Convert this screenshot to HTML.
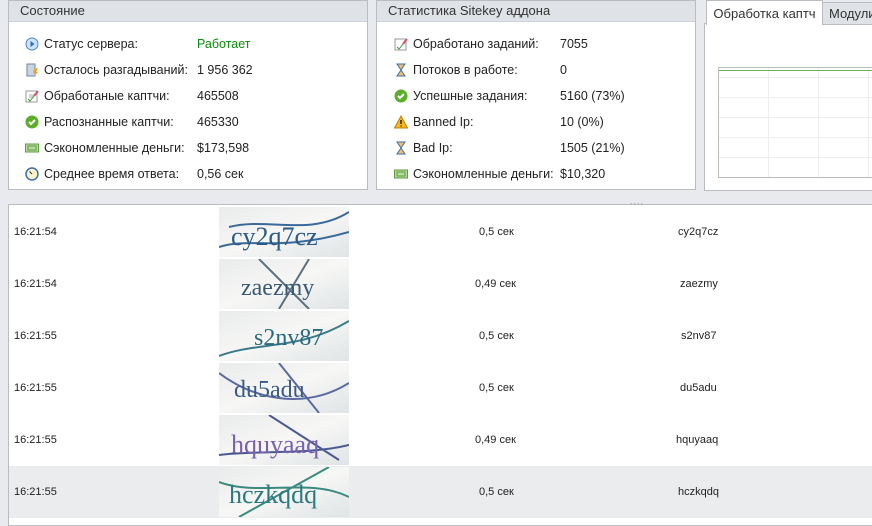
<!DOCTYPE html><html><head><meta charset="utf-8"><style>
body{margin:0;width:872px;height:517px;background:#e8eaed;font-family:"Liberation Sans",sans-serif;font-size:12.5px;color:#222;position:relative;overflow:hidden}
.p{position:absolute;background:#fff;border:1px solid #b9bcc1}
.h{position:absolute;left:0;right:0;top:0;height:20px;background:#dfe2e6;border-bottom:1px solid #cfd2d6;color:#333;font-size:13px;line-height:20px;padding-left:11px}
.r{position:absolute;height:18px;line-height:18px;white-space:nowrap}
.ic{position:absolute;width:14px;height:14px}
.t{position:absolute;font-size:11px;line-height:12px}
.row{position:absolute;left:9px;right:0;height:52px}
.cap{position:absolute;left:219px;width:130px;height:50px;background:linear-gradient(160deg,#e9ecec,#f7f7f5 50%,#dfe4e6)}
</style></head><body>
<div class="p" style="left:8px;top:0;width:358px;height:188px"><div class="h">Состояние</div></div>
<div class="p" style="left:376px;top:0;width:318px;height:188px"><div class="h">Статистика Sitekey аддона</div></div>
<div class="p" style="left:704px;top:23px;width:170px;height:166px"></div>
<div style="position:absolute;left:706px;top:0;width:115px;height:24px;background:#fff;border:1px solid #b9bcc1;border-bottom:none;font-size:13px;line-height:26px;text-align:center;color:#333">Обработка каптч</div>
<div style="position:absolute;left:822px;top:2px;width:60px;height:21px;background:#dfe2e6;border:1px solid #b9bcc1;font-size:13px;line-height:22px;padding-left:6px;color:#333">Модули</div>
<div style="position:absolute;left:718px;top:67px;width:160px;height:109px;border:1px solid #bbb;background:repeating-linear-gradient(90deg,transparent 0 49px,#eee 49px 50px),repeating-linear-gradient(0deg,transparent 0 19px,#eee 19px 20px)"></div>
<div style="position:absolute;left:719px;top:70px;width:160px;height:1px;background:#6aad5e"></div>
<div style="position:absolute;left:630px;top:196px;color:#999;font-size:9px;letter-spacing:1px">....</div>

<svg class="ic" style="left:25px;top:37px" viewBox="0 0 14 14"><circle cx="7" cy="7" r="6" fill="#cfe3f7" stroke="#4a86c5"/><path d="M5.5 4l4 3-4 3z" fill="#2d6db3"/></svg>
<div class="r" style="left:44px;top:35px">Статус сервера:</div><div class="r" style="left:197px;top:35px;color:#0a8a0a">Работает</div>
<svg class="ic" style="left:25px;top:63px" viewBox="0 0 14 14"><rect x="2" y="1" width="8" height="12" fill="#c9d6e6" stroke="#6e86a6"/><path d="M9 6l4-1-2 4h2l-4 4 1-3H8z" fill="#f0a020"/></svg>
<div class="r" style="left:44px;top:61px">Осталось разгадываний:</div><div class="r" style="left:197px;top:61px">1 956 362</div>
<svg class="ic" style="left:25px;top:89px" viewBox="0 0 14 14"><rect x="1" y="2" width="11" height="11" fill="#fff" stroke="#999"/><path d="M4 6h5M4 8h5" stroke="#aaa"/><path d="M3 10l2 2 4-5" stroke="#3a9a3a" fill="none"/><path d="M9 7l4-5" stroke="#c56" stroke-width="2"/></svg>
<div class="r" style="left:44px;top:87px">Обработаные каптчи:</div><div class="r" style="left:197px;top:87px">465508</div>
<svg class="ic" style="left:25px;top:115px" viewBox="0 0 14 14"><circle cx="7" cy="7" r="6.5" fill="#5cae2a"/><path d="M4 7l2 2 4-4" stroke="#fff" stroke-width="2" fill="none"/></svg>
<div class="r" style="left:44px;top:113px">Распознанные каптчи:</div><div class="r" style="left:197px;top:113px">465330</div>
<svg class="ic" style="left:25px;top:141px" viewBox="0 0 14 14"><rect x="0.5" y="3" width="13" height="8" fill="#b8dca0" stroke="#5c9a3c"/><rect x="3" y="5" width="8" height="4" fill="none" stroke="#5c9a3c"/></svg>
<div class="r" style="left:44px;top:139px">Сэкономленные деньги:</div><div class="r" style="left:197px;top:139px">$173,598</div>
<svg class="ic" style="left:25px;top:167px" viewBox="0 0 14 14"><circle cx="7" cy="7" r="6" fill="#fdf3c8" stroke="#3a6fb0" stroke-width="1.5"/><path d="M7 7L4.5 4.5" stroke="#333"/></svg>
<div class="r" style="left:44px;top:165px">Среднее время ответа:</div><div class="r" style="left:197px;top:165px">0,56 сек</div>

<svg class="ic" style="left:394px;top:37px" viewBox="0 0 14 14"><rect x="1" y="2" width="11" height="11" fill="#fff" stroke="#999"/><path d="M3 10l2 2 4-5" stroke="#3a9a3a" fill="none"/><path d="M9 7l4-5" stroke="#c56" stroke-width="2"/></svg>
<div class="r" style="left:413px;top:35px">Обработано заданий:</div><div class="r" style="left:560px;top:35px">7055</div>
<svg class="ic" style="left:394px;top:63px" viewBox="0 0 14 14"><path d="M3 1h8L7 7l4 6H3l4-6z" fill="#f2c060" stroke="#3a6fb0"/></svg>
<div class="r" style="left:413px;top:61px">Потоков в работе:</div><div class="r" style="left:560px;top:61px">0</div>
<svg class="ic" style="left:394px;top:89px" viewBox="0 0 14 14"><circle cx="7" cy="7" r="6.5" fill="#5cae2a"/><path d="M4 7l2 2 4-4" stroke="#fff" stroke-width="2" fill="none"/></svg>
<div class="r" style="left:413px;top:87px">Успешные задания:</div><div class="r" style="left:560px;top:87px">5160 (73%)</div>
<svg class="ic" style="left:394px;top:115px" viewBox="0 0 14 14"><path d="M7 1l6.5 12H.5z" fill="#f5b820" stroke="#c08000"/><path d="M7 5v4M7 10.5v1" stroke="#222" stroke-width="1.5"/></svg>
<div class="r" style="left:413px;top:113px">Banned Ip:</div><div class="r" style="left:560px;top:113px">10 (0%)</div>
<svg class="ic" style="left:394px;top:141px" viewBox="0 0 14 14"><path d="M3 1h8L7 7l4 6H3l4-6z" fill="#f2c060" stroke="#3a6fb0"/></svg>
<div class="r" style="left:413px;top:139px">Bad Ip:</div><div class="r" style="left:560px;top:139px">1505 (21%)</div>
<svg class="ic" style="left:394px;top:167px" viewBox="0 0 14 14"><rect x="0.5" y="3" width="13" height="8" fill="#b8dca0" stroke="#5c9a3c"/><rect x="3" y="5" width="8" height="4" fill="none" stroke="#5c9a3c"/></svg>
<div class="r" style="left:413px;top:165px">Сэкономленные деньги:</div><div class="r" style="left:560px;top:165px">$10,320</div>

<div class="p" style="left:8px;top:204px;width:870px;height:320px;border-right:none"></div>
<div class="row" style="top:206px"><div class="t" style="left:5px;top:20px">16:21:54</div><div class="t" style="left:470px;top:20px">0,5 сек</div><div class="t" style="left:669px;top:20px">cy2q7cz</div></div>
<div class="row" style="top:258px"><div class="t" style="left:5px;top:20px">16:21:54</div><div class="t" style="left:466px;top:20px">0,49 сек</div><div class="t" style="left:671px;top:20px">zaezmy</div></div>
<div class="row" style="top:310px"><div class="t" style="left:5px;top:20px">16:21:55</div><div class="t" style="left:470px;top:20px">0,5 сек</div><div class="t" style="left:672px;top:20px">s2nv87</div></div>
<div class="row" style="top:362px"><div class="t" style="left:5px;top:20px">16:21:55</div><div class="t" style="left:470px;top:20px">0,5 сек</div><div class="t" style="left:671px;top:20px">du5adu</div></div>
<div class="row" style="top:414px"><div class="t" style="left:5px;top:20px">16:21:55</div><div class="t" style="left:466px;top:20px">0,49 сек</div><div class="t" style="left:667px;top:20px">hquyaaq</div></div>
<div class="row" style="top:466px;background:#ebecee"><div class="t" style="left:5px;top:20px">16:21:55</div><div class="t" style="left:470px;top:20px">0,5 сек</div><div class="t" style="left:669px;top:20px">hczkqdq</div></div>

<div class="cap" style="top:207px"><svg width="130" height="50"><path d="M0 40C30 30 60 45 130 25M10 20C50 10 90 30 130 5" stroke="#3a6a9a" stroke-width="2" fill="none"/><text x="12" y="38" font-size="26" fill="#2a5a85" font-family="Liberation Serif">cy2q7cz</text></svg></div>
<div class="cap" style="top:259px"><svg width="130" height="50"><path d="M40 0L90 50M90 0L60 50" stroke="#5a7080" stroke-width="2" fill="none"/><text x="22" y="36" font-size="24" fill="#3a5a75" font-family="Liberation Serif">zaezmy</text></svg></div>
<div class="cap" style="top:311px"><svg width="130" height="50"><path d="M0 45C40 30 80 40 130 10" stroke="#3a7a8a" stroke-width="2" fill="none"/><text x="35" y="34" font-size="24" fill="#2a6a80" font-family="Liberation Serif">s2nv87</text></svg></div>
<div class="cap" style="top:363px"><svg width="130" height="50"><path d="M0 10C40 40 90 45 130 20M60 0L100 50" stroke="#5a6aa0" stroke-width="2" fill="none"/><text x="15" y="34" font-size="24" fill="#3a5a85" font-family="Liberation Serif">du5adu</text></svg></div>
<div class="cap" style="top:415px"><svg width="130" height="50"><path d="M0 40C40 35 90 40 130 30M50 0L120 45" stroke="#4a5a90" stroke-width="2" fill="none"/><text x="12" y="38" font-size="26" fill="#7a60b0" font-family="Liberation Serif">hquyaaq</text></svg></div>
<div class="cap" style="top:467px"><svg width="130" height="50"><path d="M0 15C40 30 90 10 130 30M20 50L110 0" stroke="#3a8a80" stroke-width="2" fill="none"/><text x="10" y="36" font-size="26" fill="#2a7a80" font-family="Liberation Serif">hczkqdq</text></svg></div>
</body></html>
